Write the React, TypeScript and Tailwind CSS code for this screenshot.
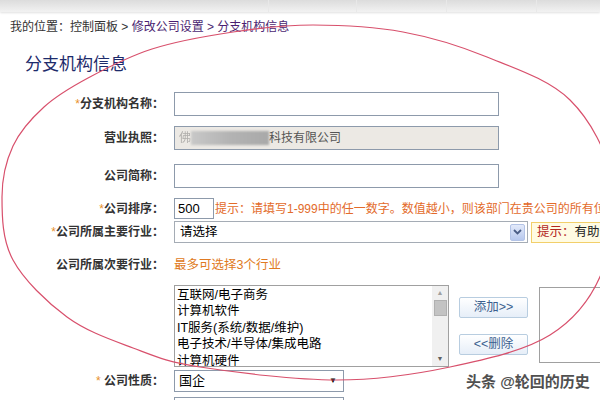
import React from "react";

type Pt = [number, number];

const CJK = "font-['Liberation_Sans','Noto_Sans_CJK_SC',sans-serif]";

// hand-drawn red ring from the screenshot
const RING: Pt[] = [
  [313, 25], [403, 32], [487, 57], [570, 100], [612, 180], [602, 272],
  [550, 335], [450, 367], [337, 380], [200, 367], [133, 348], [67, 317],
  [13, 260], [2, 197], [13, 146], [44, 107], [88, 78], [152, 49], [233, 32],
];

function ringPath(pts: Pt[]) {
  const n = pts.length;
  let d = `M${pts[0][0]},${pts[0][1]}`;
  for (let i = 0; i < n; i++) {
    const p0 = pts[(i - 1 + n) % n];
    const p1 = pts[i];
    const p2 = pts[(i + 1) % n];
    const p3 = pts[(i + 2) % n];
    const c1x = p1[0] + (p2[0] - p0[0]) / 6;
    const c1y = p1[1] + (p2[1] - p0[1]) / 6;
    const c2x = p2[0] - (p3[0] - p1[0]) / 6;
    const c2y = p2[1] - (p3[1] - p1[1]) / 6;
    d += ` C${c1x},${c1y} ${c2x},${c2y} ${p2[0]},${p2[1]}`;
  }
  return d + "Z";
}

const INDUSTRIES = [
  "互联网/电子商务",
  "计算机软件",
  "IT服务(系统/数据/维护)",
  "电子技术/半导体/集成电路",
  "计算机硬件",
];

function Label({ text, star, gap }: { text: string; star?: boolean; gap?: boolean }) {
  return (
    <div className="w-[164px] shrink-0 text-right text-[12px] font-bold text-[#333]">
      {star && <span className="text-[#e8902a] font-normal">*{gap ? " " : ""}</span>}
      {text}
    </div>
  );
}

export default function App() {
  return (
    <div className={`relative w-[600px] h-[400px] overflow-hidden bg-white ${CJK}`}>
      {/* top strip */}
      <div className="flex h-[12px] bg-gradient-to-b from-[#dcdcdc] to-[#f2f2f2] shadow-[0_1px_2px_rgba(0,0,0,0.12)]">
        <div className="w-[268px]" />
        <div className="w-[88px] border-l border-[#e8e8e8]" />
        <div className="w-[90px] border-l border-[#e8e8e8]" />
        <div className="w-[90px] border-l border-[#e8e8e8]" />
        <div className="flex-1 border-l border-[#e8e8e8]" />
      </div>

      {/* breadcrumb */}
      <div className="pt-[7px] pl-[10px] text-[12px] leading-[16px] text-[#333]">
        我的位置：控制面板 &gt; <span className="text-[#4b1f72]">修改公司设置 &gt; 分支机构信息</span>
      </div>

      <h1 className="mt-[19px] pl-[25px] text-[17px] leading-[22px] text-[#1d2b6b]">分支机构信息</h1>

      <div className="mt-[16px] flex flex-col">
        <div className="flex items-center h-[24px]">
          <Label text="分支机构名称：" star />
          <div className="ml-[10px] w-[325px] h-[24px] shrink-0 border border-[#8d9aab] bg-white" />
        </div>

        <div className="mt-[10px] flex items-center h-[24px]">
          <Label text="营业执照：" />
          <div className="ml-[10px] w-[325px] h-[24px] shrink-0 border border-[#8d9aab] bg-[#ece9e4] flex items-center pl-[4px] text-[12px] text-[#555] overflow-hidden">
            <span className="opacity-40">佛</span>
            <span className="inline-block w-[78px] h-[14px] bg-gradient-to-r from-[#c8c8c8] via-[#b3b3b3] to-[#a9a9a9] blur-[1px]" />
            <span>科技有限公司</span>
          </div>
        </div>

        <div className="mt-[14px] flex items-center h-[24px]">
          <Label text="公司简称：" />
          <div className="ml-[10px] w-[325px] h-[24px] shrink-0 border border-[#8d9aab] bg-white" />
        </div>

        <div className="mt-[10px] flex items-center h-[21px]">
          <Label text="公司排序：" star />
          <div className="ml-[10px] w-[40px] h-[21px] border border-[#8d9aab] bg-white text-[13px] leading-[19px] pl-[3px] text-black shrink-0">
            500
          </div>
          <span className="ml-[1px] whitespace-nowrap text-[12px] text-[#e36b2a]">
            提示：请填写1-999中的任一数字。数值越小，则该部门在贵公司的所有位置越靠前
          </span>
        </div>

        <div className="mt-[2px] flex items-center h-[22px]">
          <Label text="公司所属主要行业：" star />
          <div className="ml-[10px] w-[354px] h-[22px] shrink-0 border border-[#a5acb5] bg-white flex items-center pl-[5px] pr-[2px] text-[12.5px] text-black">
            <span className="flex-1">请选择</span>
            <span className="w-[15px] h-[17px] rounded-[2px] border border-[#b3c3e6] bg-gradient-to-b from-[#e3eafa] to-[#b7c8ee] flex items-center justify-center">
              <svg width="9" height="6" viewBox="0 0 9 6">
                <path d="M1 1 L4.5 4.5 L8 1" stroke="#4a5d86" strokeWidth="1.8" fill="none" />
              </svg>
            </span>
          </div>
          <div className="ml-[3px] h-[21px] shrink-0 border border-[#f2cf6a] bg-[#fffbe3] flex items-center pl-[5px] pr-[6px] whitespace-nowrap text-[12.5px]">
            <span className="text-[#b3261e]">提示：</span>
            <span className="text-[#222]">有助于您的公司被精准搜索</span>
          </div>
        </div>

        <div className="mt-[11px] flex items-center h-[22px]">
          <Label text="公司所属次要行业：" />
          <span className="ml-[10px] text-[12.5px] text-[#e07a22]">最多可选择3个行业</span>
        </div>

        <div className="mt-[9px] flex items-start">
          <div className="w-[174px] shrink-0" />
          <div className="w-[275px] h-[82px] shrink-0 border border-[#a0a0a0] bg-white flex">
            <div className="flex-1 pl-[2px] pt-[1px] text-[12.5px] leading-[16.4px] text-black">
              {INDUSTRIES.map((it) => (
                <div key={it} className="whitespace-nowrap">{it}</div>
              ))}
            </div>
            <div className="w-[16px] h-full bg-[#f0f0f0] flex flex-col items-center">
              <div className="h-[14px] flex items-center justify-center text-[7px] text-[#a0a0a0]">▲</div>
              <div className="w-[13px] h-[16px] bg-[#c3c3c3] border border-[#b0b0b0]" />
              <div className="flex-1" />
              <div className="h-[14px] flex items-center justify-center text-[7px] text-[#606060]">▼</div>
            </div>
          </div>
          <div className="ml-[10px] mt-[12px] flex flex-col gap-[16px] shrink-0">
            <button className="w-[69px] h-[21px] rounded-[2px] border border-[#b8cde0] bg-gradient-to-b from-white to-[#e6eef8] text-[12.5px] text-[#3b5f8f]">
              添加&gt;&gt;
            </button>
            <button className="w-[69px] h-[21px] rounded-[2px] border border-[#b8cde0] bg-gradient-to-b from-white to-[#e6eef8] text-[12.5px] text-[#3b5f8f]">
              &lt;&lt;删除
            </button>
          </div>
          <div className="ml-[11px] mt-[2px] w-[80px] h-[76px] border border-[#a0a0a0] bg-white shrink-0" />
        </div>

        <div className="mt-[3px] flex items-center h-[22px]">
          <Label text="公司性质：" star gap />
          <div className="ml-[10px] w-[170px] h-[22px] shrink-0 border border-[#8d9aab] bg-white flex items-center pl-[4px] pr-[6px] text-[13px] text-black">
            <span className="flex-1">国企</span>
            <span className="text-[8px] text-black">▼</span>
          </div>
        </div>

        <div className="mt-[5px] flex items-center h-[22px]">
          <div className="w-[174px] shrink-0" />
          <div className="w-[170px] h-[22px] shrink-0 border border-[#8d9aab] bg-white" />
        </div>
      </div>

      {/* annotation ring */}
      <svg className="absolute inset-0 pointer-events-none" width="600" height="400" viewBox="0 0 600 400">
        <path d={ringPath(RING)} fill="none" stroke="#d8506c" strokeWidth="1.2" />
      </svg>

      {/* watermark */}
      <div className="absolute left-[466px] top-[371px] text-[15px] font-bold text-[#505050] [text-shadow:0_0_2px_#fff,0_0_2px_#fff]">
        头条 @轮回的历史
      </div>
    </div>
  );
}
